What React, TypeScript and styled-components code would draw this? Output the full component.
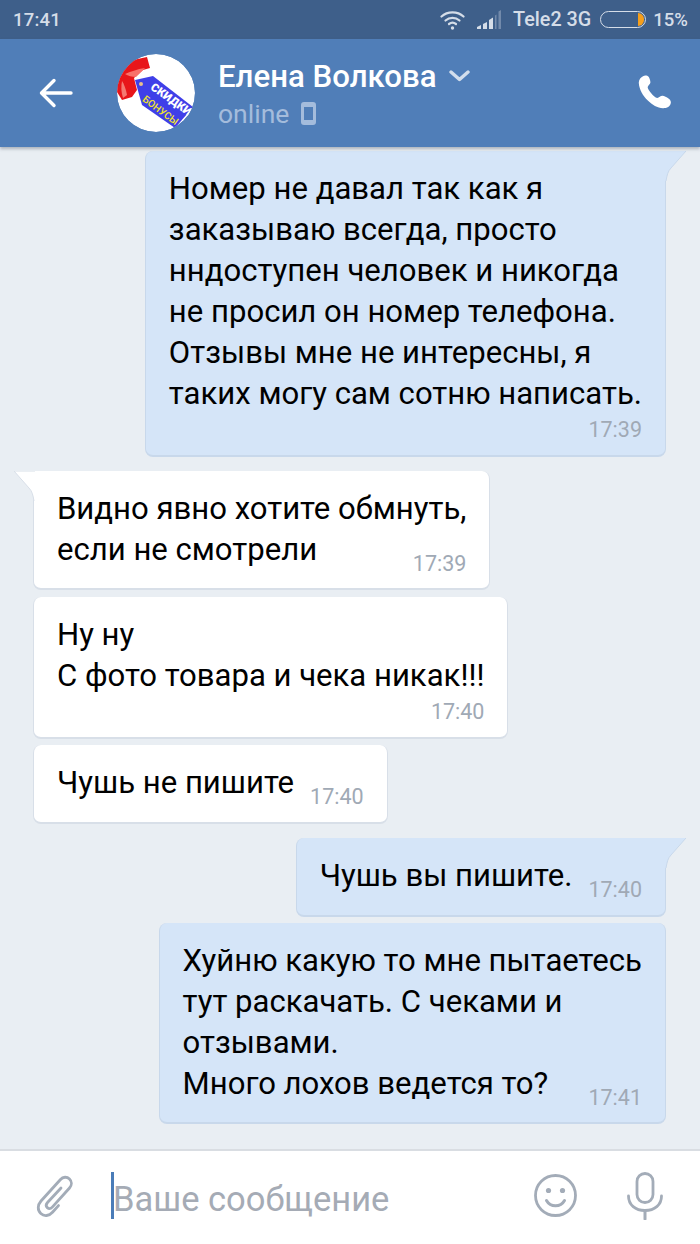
import React from 'react'
import styled, { createGlobalStyle } from 'styled-components'

const GlobalStyle = createGlobalStyle`
  html, body {
    margin: 0;
    padding: 0;
    background: #e9eef3;
  }
  * {
    box-sizing: border-box;
  }
`

type Stamp = 'below' | 'beside' | 'overlap'

interface Message {
  id: number
  mine: boolean
  lines: string[]
  time: string
  stamp: Stamp
  tail?: boolean
  gap: number
}

const messages: Message[] = [
  {
    id: 1,
    mine: true,
    tail: true,
    gap: 0,
    stamp: 'below',
    time: '17:39',
    lines: [
      'Номер не давал так как я',
      'заказываю всегда, просто',
      'нндоступен человек и никогда',
      'не просил он номер телефона.',
      'Отзывы мне не интересны, я',
      'таких могу сам сотню написать.',
    ],
  },
  {
    id: 2,
    mine: false,
    tail: true,
    gap: 14,
    stamp: 'overlap',
    time: '17:39',
    lines: ['Видно явно хотите обмнуть,', 'если не смотрели'],
  },
  {
    id: 3,
    mine: false,
    gap: 7,
    stamp: 'below',
    time: '17:40',
    lines: ['Ну ну', 'С фото товара и чека никак!!!'],
  },
  { id: 4, mine: false, gap: 6, stamp: 'beside', time: '17:40', lines: ['Чушь не пишите'] },
  { id: 5, mine: true, tail: true, gap: 14, stamp: 'beside', time: '17:40', lines: ['Чушь вы пишите.'] },
  {
    id: 6,
    mine: true,
    gap: 6,
    stamp: 'overlap',
    time: '17:41',
    lines: ['Хуйню какую то мне пытаетесь', 'тут раскачать. С чеками и', 'отзывами.', 'Много лохов ведется то?'],
  },
]

const bottomPadding: Record<Stamp, number> = { below: 12, beside: 19, overlap: 18 }

export default function App() {
  return (
    <>
      <GlobalStyle />
      <Screen>
        <StatusBar>
          <Clock>17:41</Clock>
          <StatusRight>
            <WifiIcon />
            <SignalIcon />
            <Carrier>Tele2 3G</Carrier>
            <Battery>
              <BatteryFill />
            </Battery>
            <Percent>15%</Percent>
          </StatusRight>
        </StatusBar>

        <Header>
          <BackButton>
            <svg width="34" height="30" viewBox="0 0 34 30" fill="none" stroke="#fff" strokeWidth="3.4" strokeLinecap="round" strokeLinejoin="round">
              <path d="M32 15H2.500M15 2.500 2.500 15 15 27.500" />
            </svg>
          </BackButton>
          <Avatar />
          <Who>
            <NameRow>
              <Name>Елена Волкова</Name>
              <svg width="21" height="12" viewBox="0 0 21 12" fill="none" stroke="#d3deec" strokeWidth="3.4" strokeLinecap="round" strokeLinejoin="round">
                <path d="M2 2l8.500 7.500L19 2" />
              </svg>
            </NameRow>
            <OnlineRow>
              <OnlineText>online</OnlineText>
              <svg width="15" height="23" viewBox="0 0 15 23">
                <path fillRule="evenodd" fill="#a4bcdc" d="M3 0h9a3 3 0 0 1 3 3v17a3 3 0 0 1-3 3H3a3 3 0 0 1-3-3V3a3 3 0 0 1 3-3Zm0 5v13h9V5Z" />
              </svg>
            </OnlineRow>
          </Who>
          <CallButton>
            <svg width="34" height="34" viewBox="0 0 34 34">
              <path fill="#fff" d="M5 1.200C3 2.300.600 4.500.800 8c.400 6.500 4.200 13 9 17.600 4.500 4.300 9.500 7.500 15.200 7.700 3.600.100 7.300-1.600 7.800-5.200.300-2-.600-3.700-2.300-4.700-1.700-1-4.300-2.500-6-2.600-2-.100-3.500 2.300-5.300 2.200-1.700-.100-4.500-2.900-6.200-5-1.600-2-3.500-4.500-3.300-6 .200-1.600 2.600-2.600 2.700-4.500.100-1.700-1-4.700-1.800-5.800C9.500.600 7-.100 5 1.200Z" />
            </svg>
          </CallButton>
        </Header>

        <MessageList>
          {messages.map((m) => (
            <Row key={m.id} $mine={m.mine} $gap={m.gap}>
              <Bubble $mine={m.mine} $tail={m.tail} $stamp={m.stamp}>
                {m.tail && <Tail $mine={m.mine} />}
                <Body $stamp={m.stamp}>
                  <Text $stamp={m.stamp}>
                    {m.lines.map((line) => (
                      <Line key={line}>{line}</Line>
                    ))}
                  </Text>
                  <Time $stamp={m.stamp}>{m.time}</Time>
                </Body>
              </Bubble>
            </Row>
          ))}
        </MessageList>

        <Composer>
          <ClipSlot>
            <svg width="40" height="44" viewBox="0 0 40 44" fill="none" stroke="#a3acb8" strokeWidth="2.800" strokeLinecap="round" strokeLinejoin="round">
              <path d="M26 14 12.500 28.500c-1.700 1.900-1.500 3.900-.200 5.100 1.400 1.300 3.400 1.200 5-.5L34.500 14c2.500-2.800 2.500-6.600 0-9-2.600-2.500-6.500-2.300-9 .500L6 27c-3.500 4-3.700 9.300-.200 12.500 3.400 3.100 8.300 2.600 11.700-1.200l6-6.700" />
            </svg>
          </ClipSlot>
          <Caret />
          <Placeholder>Ваше сообщение</Placeholder>
          <ComposerIcons>
            <svg width="43" height="43" viewBox="0 0 43 43" fill="none" stroke="#a3acb8" strokeWidth="2.800" strokeLinecap="round">
              <circle cx="21.500" cy="21.500" r="20" />
              <circle cx="14.500" cy="16.500" r="2.600" fill="#a3acb8" stroke="none" />
              <circle cx="28.500" cy="16.500" r="2.600" fill="#a3acb8" stroke="none" />
              <path d="M12.500 26.500c2 3.600 5 5.300 9 5.300s7-1.700 9-5.300" strokeWidth="3" />
            </svg>
            <svg width="36" height="48" viewBox="0 0 36 48" fill="none" stroke="#a3acb8" strokeWidth="2.800" strokeLinecap="round">
              <rect x="10" y="1.500" width="16" height="29" rx="8" />
              <path d="M1.500 24c0 9 7 14.500 16.500 14.500S34.500 33 34.500 24" />
              <path d="M18 38.500V47" strokeWidth="3" />
            </svg>
          </ComposerIcons>
        </Composer>
      </Screen>
    </>
  )
}

const WifiIcon = () => (
  <WifiSvg width="25" height="20" viewBox="0 0 25 20" fill="none" stroke="#d5dde8" strokeWidth="2.200" strokeLinecap="round">
    <path d="M1.500 6.500C7.500 1 17.500 1 23.500 6.500" />
    <path d="M5.500 10.500c4-3.500 10-3.500 14 0" />
    <path d="M9 14c2-1.500 5-1.500 7 0" />
    <circle cx="12.500" cy="18" r="1.700" fill="#d5dde8" stroke="none" />
  </WifiSvg>
)

const SignalIcon = () => (
  <SignalSvg width="24" height="19" viewBox="0 0 24 19" fill="#d5dde8">
    <path d="M0 19v-2l4-2v4Z" />
    <path d="M6 19v-5l4-2v7Z" />
    <path d="M12 19V10l4-2.500V19Z" />
    <path d="M18 19V5.500L19.500 4.500V19Z" opacity=".35" />
    <path d="M21.500 19V1.500L24 0v19Z" opacity=".35" />
  </SignalSvg>
)

const Avatar = () => (
  <AvatarCircle>
    <svg width="78" height="78" viewBox="0 0 78 78">
      <circle cx="39" cy="39" r="39" fill="#fff" />
      <path fill="#e8161a" d="M0 30 5 18 16 6 30 3l3 11-7 2-9 8 3 12-5 7-10 3-5-8Z" />
      <path fill="#f8716a" d="M8 20c5-2 12-5 20-6l-9 9c-4 0-8-1-11-3Z" />
      <path fill="#f47a72" d="M5 27c2 3 4 8 5 14l-4 3C4 38 4 32 5 27Z" />
      <path fill="#3f3fe8" d="M18 26 36 22 76 53 58 74 25 51Z" />
      <circle cx="24" cy="30" r="2" fill="#e9c08a" />
      <TagTitle x="52" y="48.500" textAnchor="middle" transform="rotate(35 52 48.500)">СКИДКИ</TagTitle>
      <TagSub x="41.500" y="59" textAnchor="middle" transform="rotate(37 41.500 59)">БОНУСЫ</TagSub>
    </svg>
  </AvatarCircle>
)

const Screen = styled.div`
  width: 700px;
  height: 1244px;
  display: flex;
  flex-direction: column;
  overflow: hidden;
  background: #e9eef3;
  font-family: Roboto, 'Noto Sans', sans-serif;
`

const StatusBar = styled.div`
  height: 39px;
  flex: none;
  display: flex;
  align-items: center;
  justify-content: space-between;
  padding: 0 12px 0 13px;
  background: #3e5f8a;
  color: #d5dde8;
  font-size: 18.500px;
  font-weight: 500;
`

const Clock = styled.span`
  letter-spacing: 0.200px;
`

const StatusRight = styled.div`
  display: flex;
  align-items: center;
`

const WifiSvg = styled.svg`
  margin-right: 12px;
`

const SignalSvg = styled.svg`
  margin-right: 12px;
`

const Carrier = styled.span`
  margin-right: 9px;
  font-size: 19.800px;
`

const Battery = styled.div`
  width: 46px;
  height: 17px;
  margin-right: 7px;
  display: flex;
  justify-content: flex-end;
  padding: 1px;
  border: 1.500px solid #d5dde8;
  border-radius: 9px;
  overflow: hidden;
`

const BatteryFill = styled.div`
  width: 6px;
  background: #f59f1c;
  border-radius: 0 6px 6px 0;
`

const Percent = styled.span``

const Header = styled.header`
  height: 108px;
  flex: none;
  display: flex;
  align-items: center;
  padding: 0 28px 0 39px;
  background: #507eb8;
  box-shadow: 0 2px 3px rgba(60, 70, 90, 0.35);
  z-index: 1;
`

const BackButton = styled.div`
  width: 78px;
  display: flex;
`

const AvatarCircle = styled.div`
  width: 78px;
  height: 78px;
  flex: none;
  margin-right: 23px;
  border-radius: 50%;
  overflow: hidden;
`

const TagTitle = styled.text`
  font-family: Roboto, sans-serif;
  font-size: 11.500px;
  font-weight: 900;
  fill: #fff;
`

const TagSub = styled.text`
  font-family: Roboto, sans-serif;
  font-size: 10px;
  font-weight: 500;
  fill: #f0e52a;
`

const Who = styled.div`
  flex: 1;
  display: flex;
  flex-direction: column;
`

const NameRow = styled.div`
  display: flex;
  align-items: center;
  gap: 13px;
  height: 40px;
`

const Name = styled.span`
  font-size: 31.200px;
  font-weight: 500;
  color: #fff;
`

const OnlineRow = styled.div`
  display: flex;
  align-items: center;
  gap: 12px;
  height: 34px;
`

const OnlineText = styled.span`
  font-size: 26.500px;
  color: #a4bcdc;
`

const CallButton = styled.div`
  display: flex;
  margin-top: -2px;
`

const MessageList = styled.main`
  flex: 1;
  display: flex;
  flex-direction: column;
  padding: 4px 34px 0 33px;
`

const Row = styled.div<{ $mine: boolean; $gap: number }>`
  display: flex;
  justify-content: ${(p) => (p.$mine ? 'flex-end' : 'flex-start')};
  margin-top: ${(p) => p.$gap}px;
`

const Bubble = styled.div<{ $mine: boolean; $tail?: boolean; $stamp: Stamp }>`
  position: relative;
  padding: 17px 23px ${(p) => bottomPadding[p.$stamp]}px 23px;
  background: ${(p) => (p.$mine ? '#d5e5f8' : '#fff')};
  border: 1px solid ${(p) => (p.$mine ? '#c8d8eb' : '#d8dfe8')};
  border-width: 0 1px 2px 1px;
  border-radius: ${(p) => (p.$tail ? (p.$mine ? '8px 0 8px 8px' : '0 8px 8px 8px') : '8px')};
`

const TailShape = styled.svg<{ $mine: boolean }>`
  position: absolute;
  top: 0;
  ${(p) => (p.$mine ? 'right: -21px;' : 'left: -20px;')}
`

const Tail = ({ $mine }: { $mine: boolean }) =>
  $mine ? (
    <TailShape $mine width="21" height="30" viewBox="0 0 21 30">
      <path fill="#d5e5f8" d="M0 0h21L6 17C3 20 2 24 1 30H0Z" />
      <path fill="none" stroke="#c8d8eb" d="M21 0 6 17C3 20 2 24 1 30" />
    </TailShape>
  ) : (
    <TailShape $mine={false} width="21" height="30" viewBox="0 0 21 30">
      <path fill="#fff" d="M21 0H0l15 17c3 3 4 7 5 13h1Z" />
      <path fill="none" stroke="#d8dfe8" d="M0 0 15 17c3 3 4 7 5 13M0 0h21" />
    </TailShape>
  )

const Body = styled.div<{ $stamp: Stamp }>`
  display: grid;
  ${(p) => p.$stamp === 'beside' && 'grid-auto-flow: column; column-gap: 16px;'}
`

const Text = styled.div<{ $stamp: Stamp }>`
  ${(p) => p.$stamp === 'overlap' && 'grid-area: 1 / 1;'}
  color: #000;
  font-size: 31.100px;
  line-height: 41px;
  white-space: nowrap;
`

const Line = styled.div``

const Time = styled.span<{ $stamp: Stamp }>`
  color: #a0a9b5;
  font-size: 21.500px;
  line-height: 27px;
  height: 27px;
  justify-self: end;
  align-self: end;
  ${(p) => (p.$stamp === 'below' ? 'margin-top: 2px;' : 'margin-bottom: -7px;')}
  ${(p) => p.$stamp === 'overlap' && 'grid-area: 1 / 1;'}
`

const Composer = styled.footer`
  height: 95px;
  flex: none;
  display: flex;
  align-items: center;
  padding: 0 37px 4px 35px;
  background: #fff;
  border-top: 2px solid #d9dde2;
`

const ClipSlot = styled.div`
  width: 76px;
  display: flex;
`

const Caret = styled.div`
  width: 3px;
  height: 47px;
  background: #4a7cb8;
`

const Placeholder = styled.div`
  flex: 1;
  padding-top: 6px;
  margin-left: -1px;
  font-size: 34.500px;
  color: #a5abb5;
`

const ComposerIcons = styled.div`
  display: flex;
  align-items: center;
  gap: 50px;
`
